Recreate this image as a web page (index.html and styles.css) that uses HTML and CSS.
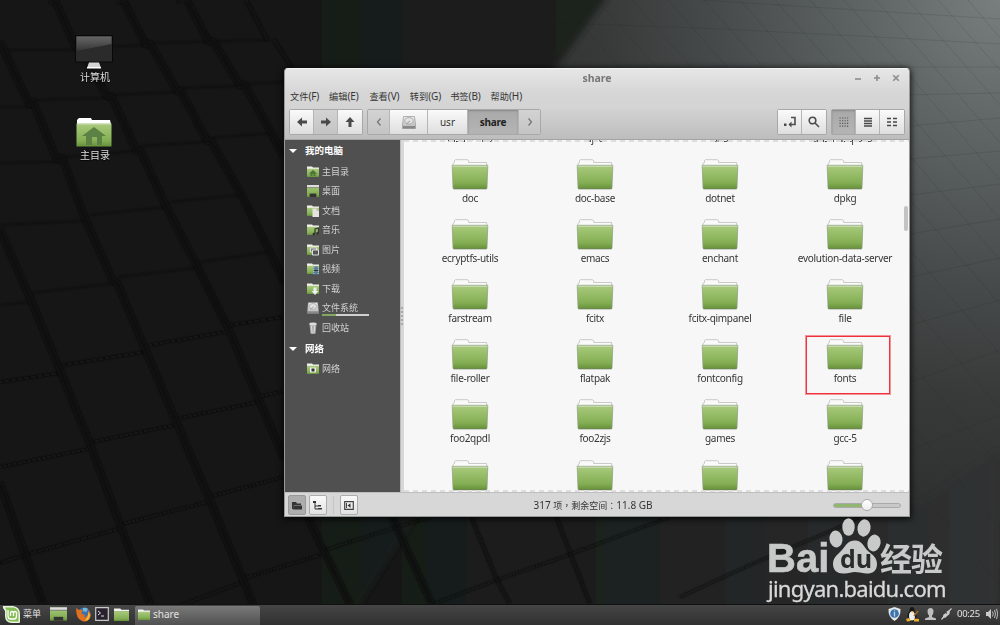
FILE: index.html
```html
<!DOCTYPE html>
<html lang="zh-CN"><head><meta charset="utf-8"><meta name="viewport" content="width=device-width"><link rel="icon" href="data:,">
<title>share</title>
<link rel="stylesheet" href="styles.css">
</head>
<body>

<!-- shared icons -->
<svg class="defs" width="0" height="0">
<defs>
<linearGradient id="green" x1="0" y1="0" x2="0" y2="1"><stop offset="0" stop-color="#a9cb7d"/><stop offset=".75" stop-color="#84ae53"/><stop offset="1" stop-color="#67913a"/></linearGradient>
<linearGradient id="disk" x1="0" y1="0" x2="0" y2="1"><stop offset="0" stop-color="#eee"/><stop offset="1" stop-color="#b5b5b5"/></linearGradient>
<symbol id="folder" viewBox="0 0 38 31">
<path d="M2 8V4.500L3.500 3.500V1.500L4.500.7H16.500L17.700 2V3.500H35.500L36 8Z" fill="#fafafa" stroke="#c4c4c4" stroke-width=".9"/>
<path d="M1.200 6.300H36.800L36 29Q36 29.800 35.300 29.800H2.700Q2 29.800 2 29Z" fill="url(#green)" stroke="#8b9b7c" stroke-width=".7"/>
<path d="M1.500 7.200H36.500" stroke="#d2dec6" stroke-width="1"/><path d="M2.500 29.700H35.500" stroke="#587737" stroke-width=".7"/>
</symbol>
<symbol id="mini" viewBox="0 0 12 12">
<path d="M0 2V.5H5L6 1.500H12V3H0Z" fill="#f2f2ec"/><path d="M0 2.800H12V11H0Z" fill="url(#green)"/>
</symbol>
<symbol id="drive" viewBox="0 0 14 13">
<path d="M1.500 .5H12.500L13.500 9V12.500H.5V9Z" fill="url(#disk)" stroke="#888" stroke-width=".6"/><ellipse cx="7" cy="4.800" rx="4.200" ry="3.200" fill="#e2e2e2" stroke="#999" stroke-width=".7"/><path d="M4 8L8 5" stroke="#999"/><path d="M1 10H13V12.300H1Z" fill="#666" opacity=".6"/>
</symbol>
<symbol id="screen" viewBox="0 0 18 14">
<path d="M0 0H18V14H0Z" fill="url(#green)"/><path d="M0 0H18V3H0Z" fill="#ddd"/><path d="M0 3H18" stroke="#555" stroke-width=".7"/><path d="M4 10H14V14H4Z" fill="#333"/>
</symbol>
</defs>
</svg>

<svg class="wallpaper" viewBox="0 0 1000 604" preserveAspectRatio="none">
<defs>
<radialGradient id="glow" gradientUnits="userSpaceOnUse" cx="1010" cy="-10" r="660"><stop offset="0" stop-color="#7b8180"/><stop offset=".22" stop-color="#5f6564"/><stop offset=".45" stop-color="#464a4a"/><stop offset=".62" stop-color="#383a39"/><stop offset="1" stop-color="#242626"/></radialGradient>
<linearGradient id="shade" x1="0" y1="0" x2="1" y2="0"><stop offset="0" stop-color="#161817"/><stop offset=".5" stop-color="#171918"/><stop offset="1" stop-color="#1f2120"/></linearGradient>
<linearGradient id="low" x1="0" y1="0" x2="1" y2="0"><stop offset="0" stop-color="#161817"/><stop offset=".5" stop-color="#202222"/><stop offset="1" stop-color="#303232"/></linearGradient>
<filter id="soft"><feGaussianBlur stdDeviation="3"/></filter>
<filter id="seam"><feGaussianBlur stdDeviation="1"/></filter>
</defs>
<path d="M0 0H1000V604H0Z" fill="url(#glow)"/>
<path d="M350 505H920L1000 450V620H350Z" fill="url(#low)" filter="url(#soft)"/>
<path d="M-10-10H612L555 70L540 110V320L350 620H-10Z" fill="url(#shade)" filter="url(#soft)"/>
<g class="thin">
<path d="M500 21L700 28L860 36L1000 44M700 0L1000 19M840 67H1000M900 95L1000 93M910 126L1000 118M910 159L1000 151M910 195L1000 184M910 234L1000 219M910 277L1000 258M910 325L1000 300M910 382L1000 350M910 450L1000 415"/>
<path d="M560 0L620 68M597 0L657 68M632 0L692 68M668 0L728 68M704 0L764 68M740 0L800 68M775 0L835 68M810 0L870 68M844 0L1000 180M876 0L1000 143M908 0L1000 105M938 0L1000 70M968 0L1000 38M910 115L1000 219M910 156L1000 260M910 200L1000 304M910 250L1000 354M910 304L1000 408M910 362L1000 466M910 424L1000 528M900 470L1000 585M850 517L930 604"/>
</g>
<g class="rows" filter="url(#seam)">
<path d="M7 50L76 50M78 48L145 45M152 43L208 42M215 41L270 40M0 107H30M35 100L107 98M112 95L177 92M182 88L238 86M245 84L284 82M0 163L58 162M64 157L135 151M140 146L205 142M210 138L272 133M0 225L85 221M90 215L165 207M170 202L240 195M0 305L30 302M32 293L115 283M118 277L195 268M200 262L268 252"/>
<path class="deep" d="M0 382L60 373M63 365L145 352M150 345L225 332M230 325L284 317M0 467L88 449M92 442L175 425M180 418L258 402M262 396L284 391M0 563L25 555L118 529M122 524L207 502M212 496L284 477M150 617L240 583M245 578L320 555M325 550L397 527L430 517M433 604L497 580L560 558L670 517M680 597L750 565L833 530L860 517"/>
</g>
<g class="seams" filter="url(#seam)">
<path d="M0 42L30 106L32 100L57 160L62 157L84 216L112 279L117 283L146 351L178 426L209 498L243 580L254 606"/>
<path d="M55 0L76 48L80 48L107 96L112 97L137 152L140 150L166 206L197 266L228 328L259 400L284 458"/>
<path d="M123 0L146 45L150 43L177 91L181 91L207 141L211 141L241 194L269 250L284 282"/>
<path d="M187 0L208 41L214 42L240 86L244 84L271 132L284 157"/>
<path d="M246 0L267 40M274 40L292 68" class="fine"/>
<path d="M0 230L30 298L60 370L90 444L120 525L150 604"/>
<path d="M0 483L25 554L43 604M306 514L324 551L350 604M392 517L432 604"/>
<path d="M470 514L497 580L510 604M555 514L590 604M50 0L52 4M118 0L120 3M178 0L180 2" class="fine"/>
</g>
</svg>

<div class="launcher computer">
<svg width="38" height="34" viewBox="0 0 38 34"><defs><linearGradient id="lcd" x1="0" y1="0" x2="0" y2="1"><stop offset="0" stop-color="#666"/><stop offset="1" stop-color="#353535"/></linearGradient></defs><path d="M.5.5H37.500V27H.5Z" fill="#2b2b2b" stroke="#080808"/><path d="M1.500 1.500H36.500V9L1.500 16Z" fill="url(#lcd)"/><path d="M14 27.500H24L26 33H12Z" fill="#d5d5d5"/><path d="M12 32H26V33.500H12Z" fill="#fff"/></svg>
<span>计算机</span>
</div>
<div class="launcher home">
<svg width="36" height="29" viewBox="0 0 36 29"><path d="M1 6V2L3 0H15L16 2H34L35 6Z" fill="#fff"/><path d="M.5 5.500H35.500V28.500H.5Z" fill="url(#green)"/><path d="M1 6H35" stroke="#d2e2c0" stroke-width=".8"/><path d="M18 9L30 18H26V27H21V19H16V27H10V18H6Z" fill="#5c8145"/></svg>
<span>主目录</span>
</div>

<div class="window">
<header>
<div class="titlebar"><h1>share</h1>
<div class="wm">
<svg width="8" height="8"><path d="M1 5H7"/></svg>
<svg width="8" height="8"><path d="M1 4H7M4 1V7"/></svg>
<svg width="8" height="8"><path d="M1.200 1.200L6.800 6.800M6.800 1.200L1.200 6.800"/></svg>
</div></div>
<nav class="menu"><span>文件<b>(F)</b></span><span>编辑<b>(E)</b></span><span>查看<b>(V)</b></span><span>转到<b>(G)</b></span><span>书签<b>(B)</b></span><span>帮助<b>(H)</b></span></nav>
<div class="toolbar">
<div class="group nav">
<button><svg width="10" height="10" viewBox="0 0 10 10"><path class="solid" d="M0 5L5 .5V3.500H10V6.500H5V9.500Z"/></svg></button>
<button class="off"><svg width="10" height="10" viewBox="0 0 10 10"><path class="solid" d="M10 5L5 .5V3.500H0V6.500H5V9.500Z"/></svg></button>
<button><svg width="10" height="10" viewBox="0 0 10 10"><path class="solid" d="M5 0L9.500 5H6.500V10H3.500V5H.5Z"/></svg></button>
</div>
<div class="group path">
<button class="off arrow"><svg width="6" height="10"><path class="chev" d="M4.500 1.500L1.500 5L4.500 8.500"/></svg></button>
<button class="root"><svg width="14" height="13"><use href="#drive"/></svg></button>
<button class="usr">usr</button>
<button class="on">share</button>
<button class="off arrow"><svg width="6" height="10"><path class="chev" d="M1.500 1.500L4.500 5L1.500 8.500"/></svg></button>
</div>
<div class="group tools">
<button><svg width="12" height="12"><path class="line" d="M7 1.500H11V8.500H6"/><path class="solid" d="M4.500 8.500L7.500 5.500V11.500ZM0 7.500H2.500V10H0Z"/></svg></button>
<button><svg width="12" height="12"><circle class="line" cx="4.500" cy="4.500" r="3.300"/><path class="line" d="M7 7L11 11"/></svg></button>
</div>
<div class="group views">
<button class="on"><svg width="10" height="10"><path class="dots" d="M.5 1H10M.5 3.700H10M.5 6.400H10M.5 9.100H10"/></svg></button>
<button><svg width="10" height="10"><path class="bars" d="M1 1.500H9M1 4H9M1 6.500H9M1 9H9"/></svg></button>
<button><svg width="10" height="10"><path class="bars" d="M0 1.500H4M6 1.500H10M0 5H4M6 5H10M0 8.500H4M6 8.500H10"/></svg></button>
</div>
</div>
</header>

<main>
<aside>
<h2>我的电脑</h2>
<ul>
<li><svg viewBox="0 0 12 12"><use href="#mini"/><path d="M6 4L10 7.500H8.500V10H6.500V8H5.500V10H3.500V7.500H2Z" fill="#4f733a"/></svg>主目录</li>
<li><svg viewBox="0 0 18 14" preserveAspectRatio="none"><use href="#screen"/></svg>桌面</li>
<li><svg viewBox="0 0 12 12"><use href="#mini"/><path d="M5.500 3.500H9.500L12 6V12H5.500Z" fill="#e5e5df"/><path d="M9.500 3.500V6H12" fill="#bbb"/></svg>文档</li>
<li><svg viewBox="0 0 12 12"><use href="#mini"/><path d="M8 10V5L11.500 4V9" stroke="#333" fill="none" stroke-width="1.200"/><circle cx="7" cy="10" r="1.500" fill="#333"/><circle cx="10.500" cy="9.500" r="1.500" fill="#333"/></svg>音乐</li>
<li><svg viewBox="0 0 12 12"><use href="#mini"/><path d="M3.500 4H9.500V8H3.500Z" fill="#777" stroke="#ddd"/><path d="M5.500 6H11.500V11H5.500Z" fill="#555" stroke="#ddd"/></svg>图片</li>
<li><svg viewBox="0 0 12 12"><use href="#mini"/><path d="M6.500 3.500H11.500V11.500H6.500Z" fill="#557da0"/><path d="M6.800 4V11M11.300 4V11" stroke="#ccc" stroke-dasharray="1 1"/><path d="M7 7.500H11" stroke="#333"/></svg>视频</li>
<li><svg viewBox="0 0 12 12"><use href="#mini"/><path d="M6.500 4.500H9.500V8H11.500L8 12L4.500 8H6.500Z" fill="#eee"/></svg>下载</li>
<li class="disk"><svg viewBox="0 0 14 13" preserveAspectRatio="none"><use href="#drive"/></svg><span>文件系统</span></li>
<li><svg viewBox="0 0 12 12"><path d="M2.500 2L3.500 11.500Q6 12.500 8.500 11.500L9.500 2Z" fill="#aaa"/><ellipse cx="6" cy="2" rx="3.700" ry="1.400" fill="#ddd"/><path d="M4.500 4L5 11M7.500 4L7 11" stroke="#ddd"/></svg>回收站</li>
</ul>
<h2>网络</h2>
<ul>
<li><svg viewBox="0 0 12 12"><use href="#mini"/><path d="M3 4.500H9V9.500H3Z" fill="#eee"/><path d="M4.500 5.500H7.500V8.500H4.500Z" fill="#333"/></svg>网络</li>
</ul>
</aside>
<div class="split"><i></i><i></i><i></i><i></i><i></i></div>
<section class="files">
<div class="grid">
<figure><svg><use href="#folder"/></svg><figcaption>distro-info</figcaption></figure>
<figure><svg><use href="#folder"/></svg><figcaption>djvu</figcaption></figure>
<figure><svg><use href="#folder"/></svg><figcaption>dns</figcaption></figure>
<figure><svg><use href="#folder"/></svg><figcaption>dnsmasq-base</figcaption></figure>
<figure><svg><use href="#folder"/></svg><figcaption>doc</figcaption></figure>
<figure><svg><use href="#folder"/></svg><figcaption>doc-base</figcaption></figure>
<figure><svg><use href="#folder"/></svg><figcaption>dotnet</figcaption></figure>
<figure><svg><use href="#folder"/></svg><figcaption>dpkg</figcaption></figure>
<figure><svg><use href="#folder"/></svg><figcaption>ecryptfs-utils</figcaption></figure>
<figure><svg><use href="#folder"/></svg><figcaption>emacs</figcaption></figure>
<figure><svg><use href="#folder"/></svg><figcaption>enchant</figcaption></figure>
<figure><svg><use href="#folder"/></svg><figcaption>evolution-data-server</figcaption></figure>
<figure><svg><use href="#folder"/></svg><figcaption>farstream</figcaption></figure>
<figure><svg><use href="#folder"/></svg><figcaption>fcitx</figcaption></figure>
<figure><svg><use href="#folder"/></svg><figcaption>fcitx-qimpanel</figcaption></figure>
<figure><svg><use href="#folder"/></svg><figcaption>file</figcaption></figure>
<figure><svg><use href="#folder"/></svg><figcaption>file-roller</figcaption></figure>
<figure><svg><use href="#folder"/></svg><figcaption>flatpak</figcaption></figure>
<figure><svg><use href="#folder"/></svg><figcaption>fontconfig</figcaption></figure>
<figure class="marked"><svg><use href="#folder"/></svg><figcaption>fonts</figcaption></figure>
<figure><svg><use href="#folder"/></svg><figcaption>foo2qpdl</figcaption></figure>
<figure><svg><use href="#folder"/></svg><figcaption>foo2zjs</figcaption></figure>
<figure><svg><use href="#folder"/></svg><figcaption>games</figcaption></figure>
<figure><svg><use href="#folder"/></svg><figcaption>gcc-5</figcaption></figure>
<figure><svg><use href="#folder"/></svg></figure>
<figure><svg><use href="#folder"/></svg></figure>
<figure><svg><use href="#folder"/></svg></figure>
<figure><svg><use href="#folder"/></svg></figure>
</div>
<div class="scroll"></div>
</section>
</main>

<footer>
<button class="on"><svg width="10" height="9"><path class="ink" d="M0 1H4L5 2.500H9V4H2L1 8H0ZM2 4.500H10V8.500H1Z"/></svg></button>
<button><svg width="10" height="9"><path class="ink" d="M0 0H3V2H0ZM5 4H8V5.500H5ZM5 7H9V8.500H5Z"/><path d="M2 2V8H5M2 5H5" stroke="#333" fill="none"/></svg></button>
<i class="sep"></i>
<button><svg width="10" height="9"><path d="M.7.7H9.300V8.300H.7Z" stroke="#444" stroke-width="1.200" fill="none"/><path d="M2.500 2V7" stroke="#444"/><path class="ink" d="M3.500 4.500L6.500 2.300V6.700Z"/></svg></button>
<p>317 <em>项<i lang="zh-TW">，</i>剩余空间<i lang="zh-TW">：</i></em>11.8 GB</p>
<div class="zoom"><i></i></div>
</footer>
</div>

<div class="watermark">
<div class="brand">
<span class="bai">Bai</span>
<svg width="54" height="57" viewBox="0 0 54 57"><ellipse cx="8" cy="21" rx="6.500" ry="8.500" transform="rotate(-8 8 21)"/><ellipse cx="20.500" cy="9" rx="6.200" ry="8.700"/><ellipse cx="36" cy="10" rx="6.500" ry="8.700" transform="rotate(10 36 10)"/><ellipse cx="46" cy="25" rx="6.500" ry="8.500" transform="rotate(12 46 25)"/><path d="M27 22.500C34 22.500 36 29 40 33C45 37 49 40 49 46C49 54 43 56 38 55.500C33 55 30 54 27 54C23 54 20 56 15 55.500C8 55.500 5 51 5 46C5 40 9 37 13 33C17 29 19 22.500 27 22.500Z"/><text x="12" y="50">du</text></svg>
<span class="exp">经验</span>
</div>
<div class="url">jingyan.baidu.com</div>
</div>

<div class="taskbar">
<svg class="mint" width="17" height="17" viewBox="0 0 17 17"><path d="M0 0H10Q17 1 17 8V16Q17 17 16 17H8Q2 16 2 10V5L0 2Z" fill="#e9f2de"/><path d="M2 1.500H10Q15.500 2 15.500 8V15.500H8Q3.500 15 3.500 10V4Z" fill="#86bd55"/><path d="M5 4V10Q5 13 8 13H11Q13.500 13 13.500 10V7Q13.500 5.500 12 5.500Q10.500 5.500 10.500 7V10M10.500 7Q10.500 5.500 9 5.500Q7.500 5.500 7.500 7V10" fill="none" stroke="#fff" stroke-width="1.300"/></svg>
<span class="start">菜单</span>
<svg class="desk" width="17" height="14"><use href="#screen"/></svg>
<svg class="fox" width="15" height="15" viewBox="0 0 15 15"><circle cx="8" cy="7" r="6.500" fill="#3b73ad"/><path d="M7 1Q10 0 12 2L10 5L7 4Z" fill="#75b6d8"/><path d="M0 1L3 3Q5 2 7 4Q5 5 6 7L9 8Q7 11 10 10Q13 8 12 3Q16 7 14 11Q11 16 6 14Q0 12 0 1Z" fill="#df701f"/><path d="M12 5Q16 8 12 13L8 14Q13 10 12 5Z" fill="#f0ba42"/></svg>
<svg class="term" width="14" height="14"><path d="M.7.7H13.300V13.300H.7Z" fill="#29222e" stroke="#c9c9c9" stroke-width="1.200"/><path d="M3 4L5.500 6L3 8M6 9H9" fill="none" stroke="#ddd"/></svg>
<svg class="dir" width="15" height="13" viewBox="0 0 12 11" preserveAspectRatio="none"><use href="#mini" width="12" height="12"/></svg>
<div class="task"><svg width="12" height="11" viewBox="0 0 12 11"><use href="#mini" width="12" height="12"/></svg>share</div>
<div class="tray">
<svg width="13" height="14" viewBox="0 0 13 14"><path d="M6.500 0L12.500 2Q13 10 6.500 14Q0 10 .5 2Z" fill="#e4e8ea"/><circle cx="6.500" cy="6.500" r="4.300" fill="#3d73ad"/><path d="M6.500 5V9.500M6.500 3.300V4.300" stroke="#b8d1e6" stroke-width="1.300"/></svg>
<svg width="14" height="15" viewBox="0 0 14 15"><ellipse cx="6" cy="9" rx="4.500" ry="5.500" fill="#171717"/><ellipse cx="6" cy="3.500" rx="2.500" ry="3.500" fill="#171717"/><ellipse cx="6" cy="9" rx="3" ry="4.500" fill="#eee"/><path d="M5 4H7.500L6.500 6Z" fill="#efb62c"/><path d="M0 12L3 11L5 14L1 14.500ZM8 11.500L13 12V14.500L8 14.500Z" fill="#e8b12c"/><path d="M8 9L12 4" stroke="#a76829" stroke-width="1.500"/></svg>
<svg width="11" height="12" viewBox="0 0 11 12"><path d="M5.500 0Q8.500 0 8.500 3.500Q8.500 6 7 7.500V9L11 10.500V12H0V10.500L4 9V7.500Q2.500 6 2.500 3.500Q2.500 0 5.500 0Z" fill="#bdbdbd"/></svg>
<svg width="11" height="12" viewBox="0 0 11 12"><path d="M10.500 .5L7.500 3.500M3.500 8L.5 11.500" stroke="#ccc" stroke-width="1.200"/><path d="M5.500 3.500L9 2L8.500 6L6.500 8ZM5 5L6.500 7L5 9.500L1.500 10L2.500 6.500Z" fill="#ccc"/></svg>
<time>00:25</time>
<svg width="12" height="12" viewBox="0 0 12 12"><path d="M0 4H2L5 1V11L2 8H0Z" fill="#ccc"/><path d="M6.500 3.500Q8 6 6.500 8.500M8.500 2Q10.500 6 8.500 10M10.500 .8Q13 6 10.500 11.200" fill="none" stroke="#bbb"/></svg>
</div>
</div>

</body>
</html>
```
FILE: styles.css
```css
* {
	box-sizing: border-box;
}
body {
	margin: 0;
	width: 1000px;
	height: 625px;
	overflow: hidden;
	position: relative;
	background: #171918;
	color: #353535;
	font: 10px/14px "Noto Sans", "Noto Sans CJK SC", sans-serif;
}
svg {
	display: block;
	flex: none;
}
.defs {
	position: absolute;
}
h1, h2, ul, figure, p {
	margin: 0;
	padding: 0;
}
button {
	font: inherit;
	color: inherit;
	margin: 0;
	padding: 0;
	border: 0;
	display: flex;
	align-items: center;
	justify-content: center;
}

/* wallpaper */
.wallpaper {
	position: absolute;
	left: 0;
	top: 0;
	width: 1000px;
	height: 604px;
}
.thin path {
	fill: none;
	stroke: #202424;
	stroke-width: 1;
	opacity: .13;
}
.rows path {
	fill: none;
	stroke: #0c0e0d;
	stroke-width: 1.5;
	opacity: .45;
}
.rows .deep {
	stroke-width: 2;
	opacity: .8;
}
.seams path {
	fill: none;
	stroke: #0a0c0b;
	stroke-width: 6;
	stroke-linejoin: bevel;
	opacity: .9;
}
.seams .fine {
	stroke-width: 3;
}

.launcher {
	position: absolute;
	display: flex;
	flex-direction: column;
	align-items: center;
	width: 60px;
	color: #ddd;
	text-shadow: 0 1px 1px #000;
}
.computer {
	left: 64px;
	top: 35px;
}
.home {
	left: 64px;
	top: 118px;
}
.launcher span {
	margin: 1px 0 0 2px;
}

/* file manager */
.window {
	position: absolute;
	left: 284px;
	top: 68px;
	width: 626px;
	height: 449px;
	display: flex;
	flex-direction: column;
	border: 1px solid #999;
	border-top-color: #f4f4f4;
	border-radius: 4px 4px 0 0;
	overflow: hidden;
	background: #d6d6d6;
	box-shadow: 0 1px 6px 1px rgba(0, 0, 0, .8);
}
header {
	height: 71px;
	flex: none;
	background: linear-gradient(#e6e6e6, #d6d6d6 24px, #d4d4d4 38px, #bdbdbd);
	border-bottom: 1px solid #a5a5a5;
}
.titlebar {
	height: 19px;
	display: flex;
	justify-content: center;
	position: relative;
}
h1 {
	font-size: 10.500px;
	line-height: 19px;
	color: #777;
}
.wm {
	position: absolute;
	right: 9px;
	top: 5px;
	display: flex;
	gap: 11px;
}
.wm svg {
	fill: none;
	stroke: #8c8c8c;
	stroke-width: 1.6;
}
.menu {
	display: flex;
	height: 20px;
	padding-left: 5px;
	line-height: 17px;
	font-size: 9.200px;
}
.menu span {
	width: 40.400px;
}
.menu span:first-child {
	width: 39px;
}
.menu b {
	font-weight: normal;
	font-size: 10px;
	letter-spacing: -.1px;
}
.toolbar {
	display: flex;
	padding: 1px 4px 0;
}
.group {
	display: flex;
	height: 26px;
	border: 1px solid #a8a8a8;
	border-radius: 2px;
}
.group button {
	width: 24px;
	background: linear-gradient(#fafafa, #dedede);
	border-right: 1px solid #b5b5b5;
}
.group button:last-child {
	border-right: 0;
}
.group .off {
	background: linear-gradient(#d3d3d3, #c4c4c4);
}
.group .on {
	background: linear-gradient(#a9a9a9, #b5b5b5);
	box-shadow: inset 0 1px 2px #888;
	color: #222;
	font-weight: bold;
}
.path {
	margin-left: 4px;
}
.group.path .arrow {
	width: 22px;
}
.group.path .arrow:last-child {
	width: 21px;
}
.path .root {
	width: 38px;
}
.path .usr {
	width: 40px;
}
.path .on {
	width: 51px;
	letter-spacing: -.2px;
}
.tools {
	margin-left: auto;
}
.views {
	margin-left: 4px;
}
.solid {
	fill: #4a4a4a;
}
.line {
	fill: none;
	stroke: #4d4d4d;
	stroke-width: 1.6;
}
.chev {
	fill: none;
	stroke: #777;
	stroke-width: 1.3;
}
.dots {
	stroke: #555;
	stroke-width: 1.1;
	stroke-dasharray: 1.2 1.3;
}
.bars {
	stroke: #484848;
	stroke-width: 1.4;
}

main {
	display: flex;
	flex: 1;
	min-height: 0;
}
aside {
	width: 115px;
	padding-top: 1px;
	background: #505050;
	color: #d2d2d2;
	font-size: 9px;
}
h2 {
	font-size: 9.500px;
	line-height: 20px;
	color: #fff;
	display: flex;
	align-items: center;
	gap: 8px;
	padding-left: 4px;
}
h2::before {
	content: "";
	border: 4px solid transparent;
	border-top: 4px solid #fff;
	border-bottom: 0;
}
aside ul {
	list-style: none;
	padding-top: 1px;
}
li {
	display: flex;
	align-items: center;
	gap: 3px;
	height: 19.500px;
	padding-left: 22px;
}
li svg {
	width: 12px;
	height: 12px;
}
.disk span {
	width: 47px;
	line-height: 13px;
	border-bottom: 2px solid #c8c8c8;
	border-image: linear-gradient(90deg, #83a860 31%, #d0d0d0 31%) 1;
}
ul + h2 {
	margin-top: 1px;
}
.split {
	width: 4px;
	background: #d8d8d8;
	border-left: 1px solid #bbb;
	display: flex;
	flex-direction: column;
	justify-content: center;
	gap: 2px;
}
.split i {
	width: 2px;
	height: 2px;
	background: #aaa;
}
.files {
	flex: 1;
	background: #f7f7f7;
	overflow: hidden;
	position: relative;
}
.files::before, .files::after {
	content: "";
	position: absolute;
	left: 0;
	right: 0;
	top: 0;
	height: 2px;
	background: repeating-linear-gradient(90deg, #dedede 0 5px, transparent 5px 9px);
}
.files::after {
	top: auto;
	bottom: 0;
}
.grid {
	display: grid;
	grid-template-columns: repeat(4, 125px);
	grid-auto-rows: 60.100px;
	margin: -41px 0 0 3px;
}
figure {
	display: flex;
	flex-direction: column;
	align-items: center;
}
figure svg {
	width: 38px;
	height: 31px;
}
figcaption {
	white-space: nowrap;
	padding-left: 1px;
	margin-top: 1px;
	letter-spacing: -.3px;
}
.marked {
	position: relative;
}
/* red frame around the fonts folder */
.marked::after {
	content: "";
	position: absolute;
	left: 24px;
	top: -3px;
	width: 82px;
	height: 56px;
	border: 1px solid #f0303a;
	outline: .5px solid rgba(240, 48, 58, .5);
}
.scroll {
	position: absolute;
	right: 1px;
	top: 66px;
	width: 4px;
	height: 25px;
	border-radius: 2px;
	background: #c3c3c3;
}
footer {
	height: 24px;
	flex: none;
	display: flex;
	align-items: center;
	padding: 1px 8px 0 3px;
	border-top: 1px solid #bebebe;
	background: #d7d7d7;
	position: relative;
}
footer button {
	width: 18px;
	height: 20px;
	margin-right: 3px;
	border: 1px solid #adadad;
	border-radius: 2px;
	background: linear-gradient(#fafafa, #e0e0e0);
}
footer .on {
	background: #adadad;
	border-color: #999;
}
.ink {
	fill: #333;
}
.sep {
	height: 18px;
	width: 1px;
	margin: 0 6px 0 3px;
	background: #c4c4c4;
}
footer p {
	position: absolute;
	left: 0;
	width: 100%;
	padding-right: 8px;
	text-align: center;
}
footer em {
	font-style: normal;
	font-size: 9px;
}
footer em i {
	font-style: normal;
	font-family: "Noto Sans CJK TC", sans-serif;
}
.zoom {
	width: 68px;
	height: 5px;
	margin-left: auto;
	display: flex;
	align-items: center;
	justify-content: center;
	border: 1px solid #aaa;
	border-radius: 3px;
	background: linear-gradient(90deg, #91b66f 50%, #c8c8c8 50%);
}
.zoom i {
	width: 12px;
	height: 12px;
	flex: none;
	border: 1px solid #aaa;
	border-radius: 50%;
	background: linear-gradient(#fff, #eee);
}

.watermark {
	position: absolute;
	left: 767px;
	top: 518px;
	color: #c8c9c9;
}
.brand {
	display: flex;
	height: 57px;
	align-items: flex-end;
}
.brand svg {
	margin-left: -1px;
	align-self: flex-start;
	fill: #c8c9c9;
}
.brand text {
	font: bold 25px "Open Sans", sans-serif;
	fill: #292b2b;
}
.bai {
	font: bold 40px/40px "Liberation Sans", sans-serif;
	width: 62px;
	margin-bottom: -3px;
	-webkit-text-stroke: .6px #c8c9c9;
}
.exp {
	font: bold 32px/36px "Noto Sans CJK SC", sans-serif;
	margin-left: -2px;
	letter-spacing: -1px;
}
.url {
	font: 22px/27px "Noto Sans", sans-serif;
	letter-spacing: -.75px;
	color: #d8d8d8;
	margin-left: 1px;
	-webkit-text-stroke: .3px #d8d8d8;
}

.taskbar {
	position: absolute;
	left: 0;
	right: 0;
	bottom: 0;
	height: 21px;
	display: flex;
	align-items: center;
	background: linear-gradient(#464646, #303030);
	border-top: 1px solid #111;
	color: #e3e3e3;
	padding: 0 2px 2px 3px;
}
.start {
	font-size: 9px;
	margin: 0 9px 0 3px;
	width: 18px;
}
.fox {
	margin: 0 4px 0 9px;
}
.term {
	margin-right: 5px;
}
.task {
	margin-left: 6px;
	width: 125px;
	height: 19px;
	margin-bottom: -2px;
	padding: 0 0 2px 3px;
	display: flex;
	align-items: center;
	gap: 3px;
	border-radius: 2px 2px 0 0;
	background: linear-gradient(#797979, #515151);
}
.tray {
	margin-left: auto;
	display: flex;
	align-items: center;
	gap: 5px;
}
time {
	font-size: 9.500px;
	width: 24px;
	letter-spacing: -.3px;
}
```
